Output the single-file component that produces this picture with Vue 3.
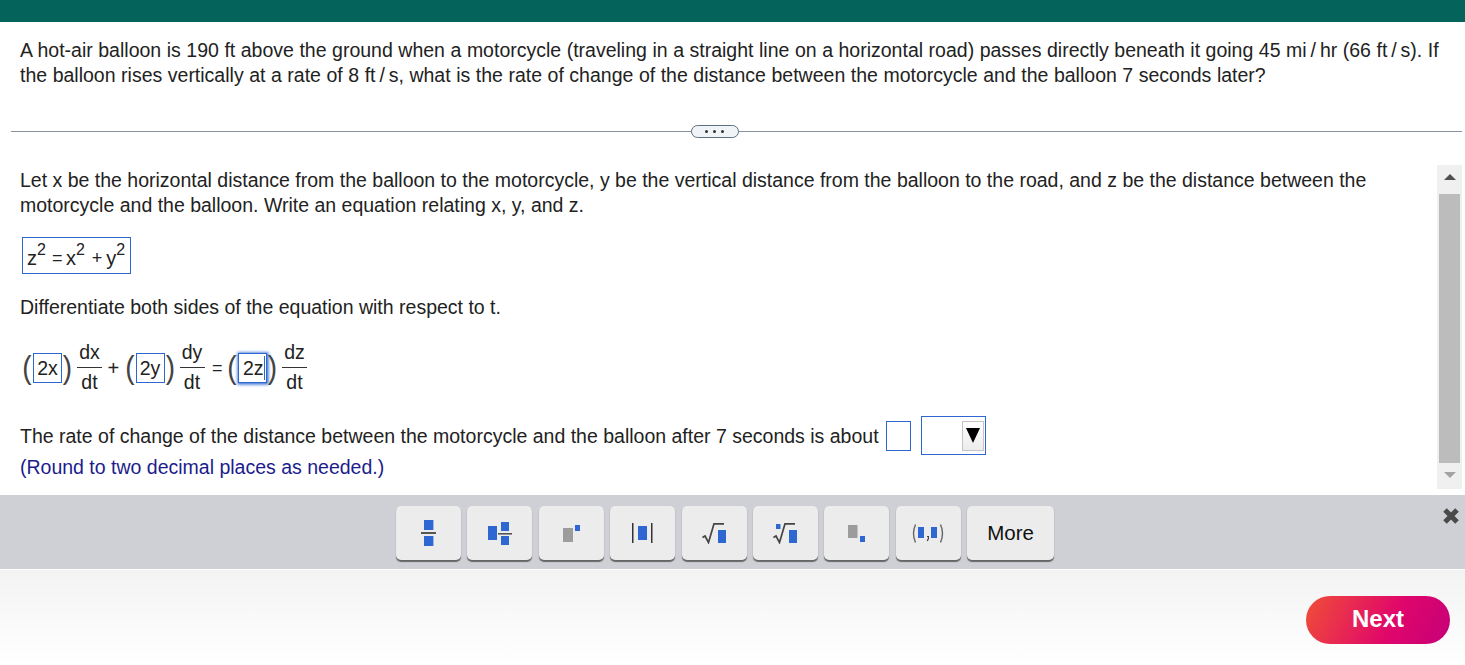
<template>
  <div class="page">
    <div class="topbar"></div>

    <p class="question">
      A hot-air balloon is 190 ft above the ground when a motorcycle (traveling in a straight line on a horizontal road) passes directly beneath it going 45 mi&thinsp;/&thinsp;hr (66 ft&thinsp;/&thinsp;s). If the balloon rises vertically at a rate of 8 ft&thinsp;/&thinsp;s, what is the rate of change of the distance between the motorcycle and the balloon 7 seconds later?
    </p>

    <div class="divider">
      <span class="pill"><i></i><i></i><i></i></span>
    </div>

    <div class="pane">
      <div class="content">
        <p class="intro">
          Let x be the horizontal distance from the balloon to the motorcycle, y be the vertical distance from the balloon to the road, and z be the distance between the motorcycle and the balloon. Write an equation relating x, y, and z.
        </p>

        <div class="answer-eq">
          <span>z<sup>2</sup></span><span class="op">=</span><span>x<sup>2</sup></span><span class="op plus">+</span><span>y<sup>2</sup></span>
        </div>

        <p class="diff">Differentiate both sides of the equation with respect to t.</p>

        <div class="deriv">
          <template v-for="term in terms" :key="term.box">
            <span class="paren">(</span>
            <span class="box" :class="{ focused: term.focused }">{{ term.box }}<b v-if="term.focused" class="caret"></b></span>
            <span class="paren right">)</span>
            <span class="frac">
              <span class="num">{{ term.num }}</span>
              <span class="den">dt</span>
            </span>
            <span v-if="term.op" class="deriv-op" :class="{ 'plus-op': term.op === '+' }">{{ term.op }}</span>
          </template>
        </div>

        <div class="rate">
          <span class="rate-text">The rate of change of the distance between the motorcycle and the balloon after 7 seconds is about</span>
          <span class="blank"></span>
          <span class="select">
            <span class="select-btn">
              <svg width="14" height="15" viewBox="0 0 14 15"><path d="M0 0h14L7 15z" fill="#000" /></svg>
            </span>
          </span>
        </div>

        <p class="hint">(Round to two decimal places as needed.)</p>
      </div>

      <div class="scrollbar">
        <span class="arrow up"></span>
        <span class="thumb"></span>
        <span class="arrow down"></span>
      </div>
    </div>

    <div class="toolbar">
      <button class="tool">
        <svg width="15" height="26" viewBox="0 0 15 26">
          <rect x="3" y="0" width="9.4" height="10" fill="#2e67d2" />
          <rect x="0" y="12" width="15" height="2" fill="#555" />
          <rect x="3" y="16" width="9.4" height="10" fill="#2e67d2" />
        </svg>
      </button>
      <button class="tool">
        <svg width="24" height="23" viewBox="0 0 24 23">
          <rect x="0" y="4" width="9" height="14" fill="#2e67d2" />
          <rect x="13" y="0" width="8" height="9" fill="#2e67d2" />
          <rect x="10" y="11" width="14" height="1.6" fill="#555" />
          <rect x="13" y="14" width="8" height="9" fill="#2e67d2" />
        </svg>
      </button>
      <button class="tool">
        <svg width="17" height="17" viewBox="0 0 17 17">
          <rect x="0" y="3" width="10" height="14" fill="#9c9c9c" />
          <rect x="12" y="0" width="5" height="6" fill="#2e67d2" />
        </svg>
      </button>
      <button class="tool">
        <svg width="21" height="20" viewBox="0 0 21 20">
          <rect x="0" y="0" width="1.5" height="20" fill="#333" />
          <rect x="6" y="3" width="9" height="14" fill="#2e67d2" />
          <rect x="19" y="0" width="1.5" height="20" fill="#333" />
        </svg>
      </button>
      <button class="tool">
        <svg width="24" height="21" viewBox="0 0 24 21">
          <path d="M0.5 14.5l2.5-1.5 3.5 6.5L12 0.8h10" fill="none" stroke="#444" stroke-width="1.7" />
          <rect x="16" y="7" width="8" height="13" fill="#2e67d2" />
        </svg>
      </button>
      <button class="tool">
        <svg width="24" height="21" viewBox="0 0 24 21">
          <rect x="3" y="1" width="4.5" height="5" fill="#2e67d2" />
          <path d="M0.5 14.5l2.5-1.5 3.5 6.5L12 0.8h10" fill="none" stroke="#444" stroke-width="1.7" />
          <rect x="16" y="7" width="8" height="13" fill="#2e67d2" />
        </svg>
      </button>
      <button class="tool">
        <svg width="17" height="17" viewBox="0 0 17 17">
          <rect x="0" y="0" width="9.5" height="13" fill="#9c9c9c" />
          <rect x="12" y="11" width="5" height="6" fill="#2e67d2" />
        </svg>
      </button>
      <button class="tool">
        <svg width="32" height="19" viewBox="0 0 32 19">
          <path d="M3.5 0.5Q-0.5 9.5 3.5 18.5M28.5 0.5Q32.5 9.5 28.5 18.5" fill="none" stroke="#666" stroke-width="1.4" />
          <rect x="6" y="3" width="6" height="11" fill="#2e67d2" />
          <rect x="19" y="3" width="6" height="11" fill="#2e67d2" />
          <path d="M15 12.5h1.4v2l-1.1 2.5" fill="none" stroke="#444" stroke-width="1.2" />
        </svg>
      </button>
      <button class="tool more">More</button>
      <svg class="close" width="18" height="18" viewBox="0 0 18 18">
        <path d="M3 3l12 12M15 3L3 15" stroke="#4a4a4a" stroke-width="5" />
      </svg>
    </div>

    <div class="footer">
      <button class="next">Next</button>
    </div>
  </div>
</template>

<script setup>
const terms = [
  { box: "2x", num: "dx", op: "+" },
  { box: "2y", num: "dy", op: "=" },
  { box: "2z", num: "dz", focused: true }
];
</script>

<style>
html,
body {
  margin: 0;
  background: #fff;
}
</style>

<style scoped>
.page {
  width: 1465px;
  height: 665px;
  overflow: hidden;
  font-family: "Liberation Sans", Arial, sans-serif;
  font-size: 19.5px;
  color: #222;
  background: #fff;
}

p {
  margin: 0;
}

.topbar {
  height: 22px;
  background: #04635a;
}

.question {
  padding: 16px 20px 0;
  line-height: 25px;
  height: 65px;
  word-spacing: 0.12px;
}

.divider {
  margin: 28px 3px 0 11px;
  height: 1px;
  background: #8a93a3;
  display: flex;
  justify-content: center;
  align-items: center;
}

.pill {
  width: 46px;
  height: 11px;
  border: 1px solid #5f7080;
  border-radius: 7px;
  background: #f1f4f7;
  display: flex;
  justify-content: center;
  align-items: center;
  gap: 5px;
  transform: translateX(-22px);
}

.pill i {
  width: 3px;
  height: 3px;
  border-radius: 50%;
  background: #333;
}

.pane {
  margin-top: 33px;
  height: 330px;
  display: flex;
  align-items: flex-start;
}

.content {
  width: 1437px;
  padding-left: 20px;
  box-sizing: border-box;
}

.intro {
  padding-top: 3px;
  line-height: 25px;
  width: 1370px;
}

.answer-eq {
  margin: 19px 0 0 2px;
  width: 109px;
  height: 37px;
  box-sizing: border-box;
  border: 1px solid #2e67d2;
  display: flex;
  align-items: center;
  padding: 5px 0 0 4px;
  font-size: 20px;
}

sup {
  font-size: 16px;
  line-height: 0;
  vertical-align: 10px;
}

.op {
  margin: 0 3.5px 0 6px;
  font-size: 18px;
}

.plus {
  margin: 0 4px 0 7px;
}

.diff {
  margin-top: 21px;
  line-height: 25px;
}

.deriv {
  margin-top: 25px;
  height: 46px;
  display: flex;
  align-items: center;
  padding-left: 5px;
}

.paren {
  width: 8px;
  font-size: 31px;
  line-height: 30px;
  color: #444;
  display: flex;
  justify-content: center;
  transform: translateX(-2px) scaleX(0.9);
}

.paren.right {
  width: 9px;
  transform: translateX(1px) scaleX(0.9);
}

.box {
  height: 30px;
  width: 29px;
  box-sizing: border-box;
  border: 1px solid #2e67d2;
  display: flex;
  align-items: center;
  justify-content: center;
}

.box.focused {
  box-shadow: 0 0 3px 1.5px #2e67d2;
  justify-content: flex-start;
  padding-left: 4px;
}

.caret {
  width: 1px;
  height: 24px;
  background: #2e67d2;
}

.frac {
  margin-left: 6px;
  width: 25px;
  height: 46px;
  display: flex;
  flex-direction: column;
  align-items: center;
}

.num {
  height: 23px;
  box-sizing: border-box;
  border-bottom: 1px solid #333;
  width: 100%;
  text-align: center;
  line-height: 14px;
}

.den {
  height: 23px;
  line-height: 28px;
}

.deriv-op {
  width: 25.5px;
  box-sizing: border-box;
  text-align: center;
  font-size: 18px;
}

.plus-op {
  padding-right: 3px;
  font-size: 20px;
}

.rate {
  margin-top: 25px;
  height: 39px;
  display: flex;
  align-items: center;
}

.rate-text {
  padding-top: 2px;
}

.blank {
  width: 25px;
  height: 30px;
  box-sizing: border-box;
  border: 1px solid #2e67d2;
  margin-left: 7px;
}

.select {
  width: 65px;
  height: 39px;
  box-sizing: border-box;
  border: 1px solid #2e67d2;
  margin-left: 10px;
  display: flex;
  justify-content: flex-end;
  align-items: center;
  padding-right: 1px;
}

.select-btn {
  width: 22px;
  height: 30px;
  box-sizing: border-box;
  border: 1px solid #c4c4c4;
  background: linear-gradient(#fff, #ececec);
  display: flex;
  justify-content: center;
  align-items: center;
}

.hint {
  margin-top: 0;
  line-height: 25px;
  color: #1c1c8e;
}

.scrollbar {
  width: 25px;
  height: 324px;
  background: #f0f0f0;
  display: flex;
  flex-direction: column;
  align-items: center;
}

.arrow {
  width: 0;
  height: 0;
  border-left: 6px solid transparent;
  border-right: 6px solid transparent;
}

.arrow.up {
  margin: 9px 0 14px;
  border-bottom: 6px solid #505050;
}

.arrow.down {
  margin: 9px 0 0;
  border-top: 6px solid #a3a3a3;
}

.thumb {
  width: 21px;
  height: 269px;
  background: #bcbcbc;
}

.toolbar {
  height: 74px;
  box-sizing: border-box;
  background: #cfd0d6;
  padding: 11px 0 0 396px;
  display: flex;
  align-items: flex-start;
  gap: 6.4px;
  position: relative;
}

.tool {
  width: 65px;
  height: 54px;
  padding: 0;
  border: none;
  border-radius: 5px;
  background: #ececec;
  box-shadow: 0 1.5px 1px #666;
  display: flex;
  align-items: center;
  justify-content: center;
  font-family: inherit;
  font-size: 20.5px;
  color: #111;
}

.more {
  width: 87px;
}

.close {
  position: absolute;
  right: 5px;
  top: 12px;
}

.footer {
  height: 96px;
  box-sizing: border-box;
  background: linear-gradient(#f3f3f3, #fff);
  border-top: 1px solid #fff;
  padding: 26px 15px 0 0;
  display: flex;
  justify-content: flex-end;
  align-items: flex-start;
}

.next {
  width: 144px;
  height: 48px;
  padding: 0 0 2px;
  border: none;
  border-radius: 24px;
  background: linear-gradient(115deg, #f04e37 0%, #e0066b 60%, #c50078 100%);
  color: #fff;
  font-family: inherit;
  font-size: 24px;
  font-weight: 700;
}
</style>
